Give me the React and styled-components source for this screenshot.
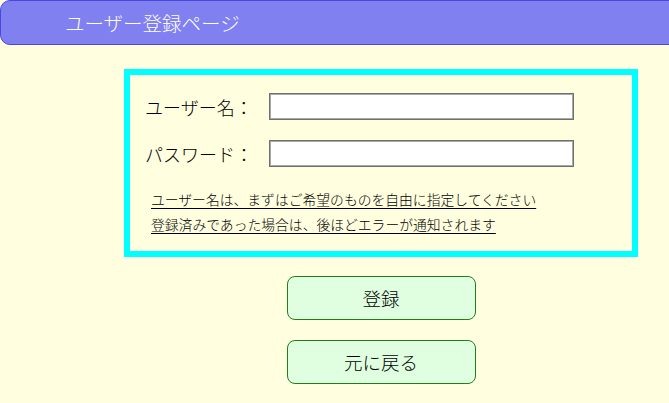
import React from "react";
import styled, { createGlobalStyle } from "styled-components";

const GlobalStyle = createGlobalStyle`
  html, body {
    margin: 0;
    padding: 0;
    background: #ffffe0;
    overflow-x: hidden;
  }
  body {
    font-family: "Noto Sans CJK JP", "Noto Sans", sans-serif;
    font-weight: 300;
    color: #000000;
  }
`;

const Page = styled.div`
  width: 669px;
  min-height: 403px;
`;

const Header = styled.header`
  box-sizing: border-box;
  height: 45px;
  margin-right: -12px;
  padding-left: 64px;
  display: flex;
  align-items: center;
  background: #8080f0;
  border: 1px solid #4848e0;
  border-radius: 10px;
  color: #ffffff;
  font-size: 19.5px;
  line-height: 1;
`;

const Main = styled.main`
  width: 514px;
  margin-left: 124px;
  padding-top: 24px;
`;

const FormBox = styled.section`
  box-sizing: border-box;
  width: 514px;
  border: 6px solid #00ffff;
  padding: 18px 15px 14px 15px;
  display: flex;
  flex-direction: column;
`;

const Row = styled.div`
  display: flex;
  align-items: center;
  height: 27px;
  margin-bottom: ${(p) => (p.$last ? "0" : "20px")};
`;

const Label = styled.label`
  width: 124px;
  font-size: 18px;
  line-height: 1;
`;

const Input = styled.input`
  box-sizing: border-box;
  width: 305px;
  height: 27px;
  margin: 0;
  background: #ffffff;
  border: 1px solid #707070;
  box-shadow: inset 0 0 0 1px #a8a8a8;
  font-family: inherit;
  font-size: 15px;
  padding: 0 4px;
`;

const Notes = styled.div`
  margin-top: 20px;
  padding-left: 6px;
`;

const Note = styled.p`
  margin: 0;
  height: 25px;
  line-height: 25px;
  font-size: 13.8px;
  text-decoration: underline;
  text-underline-offset: 3px;
  white-space: nowrap;
`;

const Buttons = styled.div`
  margin-top: 19px;
  display: flex;
  flex-direction: column;
  align-items: center;
  gap: 20px;
`;

const Button = styled.button`
  box-sizing: border-box;
  width: 189px;
  height: 44px;
  background: #e0ffe0;
  border: 1.5px solid #1f7f1f;
  border-radius: 8px;
  font-family: inherit;
  font-weight: 300;
  font-size: 18.5px;
  color: #000000;
  cursor: pointer;
  padding: 0;
  line-height: 1;
`;

export default function App() {
  return (
    <Page>
      <GlobalStyle />
      <Header>ユーザー登録ページ</Header>
      <Main>
        <FormBox>
          <Row>
            <Label htmlFor="user">ユーザー名：</Label>
            <Input id="user" type="text" />
          </Row>
          <Row $last>
            <Label htmlFor="pass">パスワード：</Label>
            <Input id="pass" type="password" />
          </Row>
          <Notes>
            <Note>ユーザー名は、まずはご希望のものを自由に指定してください</Note>
            <Note>登録済みであった場合は、後ほどエラーが通知されます</Note>
          </Notes>
        </FormBox>
        <Buttons>
          <Button>登録</Button>
          <Button>元に戻る</Button>
        </Buttons>
      </Main>
    </Page>
  );
}
